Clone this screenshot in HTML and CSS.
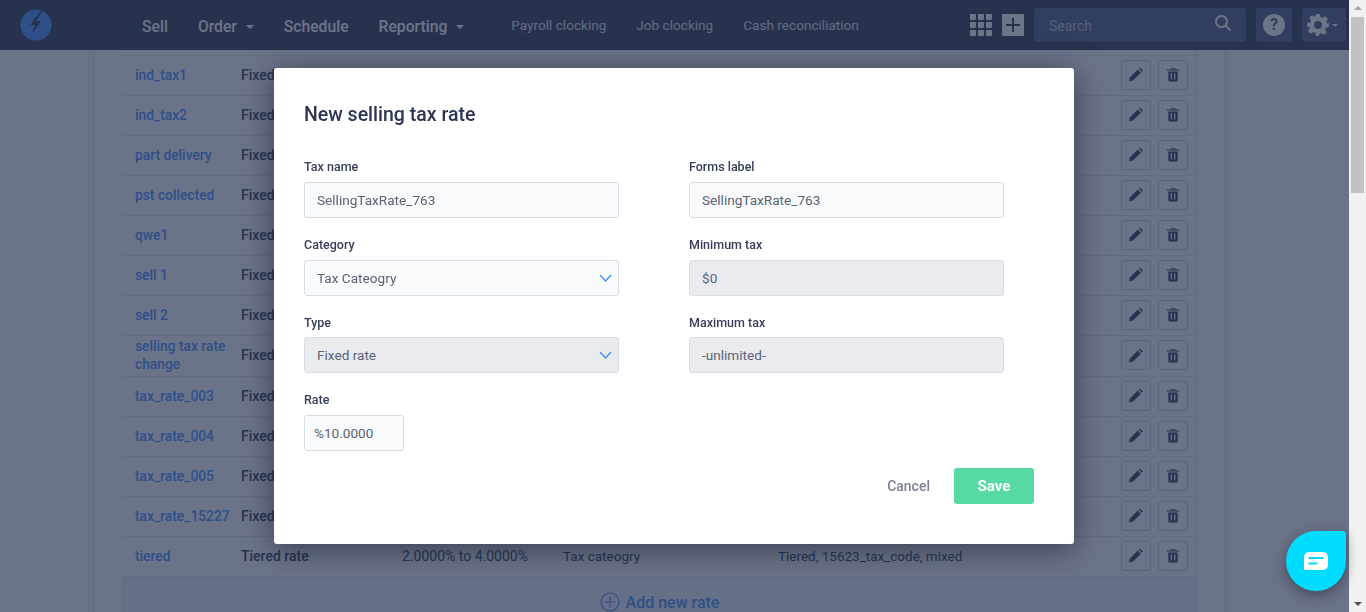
FILE: index.html
```html
<!DOCTYPE html>
<html lang="en">
<head>
    <meta charset="UTF-8">
    <title>Selling tax rates</title>
    <link rel="stylesheet" href="styles.css">
</head>
<body>
    <svg class="defs" width="0" height="0">
        <symbol id="pencil" viewBox="1 .8 14.200 14.200">
            <path d="M1 15l.9-4L10 2.900 13.100 6 5 14.100z"/>
            <path d="M11 1.900l1.100-1.100 3.100 3.100-1.100 1.100z"/>
        </symbol>
        <symbol id="trash" viewBox="-1 -.5 18 19">
            <path fill-rule="evenodd" d="M2 5h12v11a2 2 0 0 1-2 2H4a2 2 0 0 1-2-2zm3 2.500v8h1.600v-8zm4.400 0v8H11v-8z"/>
            <path d="M0 2.500h4.500L5.500.5h5l1 2H16V4H0zM6.300 1.500l-.5 1h4.400l-.5-1z"/>
        </symbol>
    </svg>

    <div class="window">
        <div class="main">
            <header class="topbar">
                <svg class="logo" viewBox="0 0 32 32" width="32" height="32">
                    <circle cx="16" cy="16" r="15.500" fill="#3f8cff"/>
                    <path d="M21 1.500L10 16h5l-3 9 9-13h-5l6-10z" fill="#26324f"/>
                </svg>
                <nav class="nav">
                    <a class="nav-main">Sell</a>
                    <a class="nav-main">Order <i class="caret"></i></a>
                    <a class="nav-main">Schedule</a>
                    <a class="nav-main">Reporting <i class="caret"></i></a>
                </nav>
                <nav class="nav nav-sub">
                    <a>Payroll clocking</a>
                    <a>Job clocking</a>
                    <a>Cash reconciliation</a>
                </nav>
                <div class="tools">
                    <div class="apps">
                        <i></i><i></i><i></i><i></i><i></i><i></i><i></i><i></i><i></i>
                    </div>
                    <svg class="plus" viewBox="0 0 22 22" width="22" height="22">
                        <rect width="22" height="22" rx="1" fill="#fff"/>
                        <path d="M11 4v14M4 11h14" stroke="#26324f" stroke-width="2"/>
                    </svg>
                    <div class="search">
                        <span>Search</span>
                        <svg viewBox="0 0 18 18" width="18" height="18" fill="none" stroke="#fff" stroke-width="2">
                            <circle cx="7.500" cy="7.500" r="5.500"/>
                            <path d="M11.500 11.500l5 5"/>
                        </svg>
                    </div>
                    <div class="tool-box help">
                        <span>?</span>
                    </div>
                    <div class="tool-box gear">
                        <svg viewBox="0 0 24 24" width="24" height="24">
                            <path fill="#fff" fill-rule="evenodd" d="M10 1h4l.6 3.200 1.800.8 2.800-1.800 2.800 2.800-1.800 2.700.8 1.800L23 10v4l-3.200.6-.8 1.800 1.800 2.800-2.800 2.800-2.700-1.800-1.800.8L13 23h-3l-.6-3.200-1.800-.8-2.800 1.800-2.800-2.800L3.800 15.300 3 13.500 1 14v-4l3.200-.6.800-1.800-1.800-2.800 2.800-2.800L8.700 3.800l.7-.3zM12 8a4 4 0 1 0 0 8 4 4 0 0 0 0-8z"/>
                        </svg>
                        <i class="caret"></i>
                    </div>
                </div>
            </header>

            <div class="content">
                <div class="panel">
                    <div class="rates">
                        <div class="row row-cut"></div>
                        <div class="row"><a>ind_tax1</a><b>Fixed rate</b><div class="actions"><button><svg><use href="#pencil"/></svg></button><button><svg><use href="#trash"/></svg></button></div></div>
                        <div class="row"><a>ind_tax2</a><b>Fixed rate</b><div class="actions"><button><svg><use href="#pencil"/></svg></button><button><svg><use href="#trash"/></svg></button></div></div>
                        <div class="row"><a>part delivery</a><b>Fixed rate</b><div class="actions"><button><svg><use href="#pencil"/></svg></button><button><svg><use href="#trash"/></svg></button></div></div>
                        <div class="row"><a>pst collected</a><b>Fixed rate</b><div class="actions"><button><svg><use href="#pencil"/></svg></button><button><svg><use href="#trash"/></svg></button></div></div>
                        <div class="row"><a>qwe1</a><b>Fixed rate</b><div class="actions"><button><svg><use href="#pencil"/></svg></button><button><svg><use href="#trash"/></svg></button></div></div>
                        <div class="row"><a>sell 1</a><b>Fixed rate</b><div class="actions"><button><svg><use href="#pencil"/></svg></button><button><svg><use href="#trash"/></svg></button></div></div>
                        <div class="row"><a>sell 2</a><b>Fixed rate</b><div class="actions"><button><svg><use href="#pencil"/></svg></button><button><svg><use href="#trash"/></svg></button></div></div>
                        <div class="row row-tall"><a>selling tax rate change</a><b>Fixed rate</b><div class="actions"><button><svg><use href="#pencil"/></svg></button><button><svg><use href="#trash"/></svg></button></div></div>
                        <div class="row"><a>tax_rate_003</a><b>Fixed rate</b><div class="actions"><button><svg><use href="#pencil"/></svg></button><button><svg><use href="#trash"/></svg></button></div></div>
                        <div class="row"><a>tax_rate_004</a><b>Fixed rate</b><div class="actions"><button><svg><use href="#pencil"/></svg></button><button><svg><use href="#trash"/></svg></button></div></div>
                        <div class="row"><a>tax_rate_005</a><b>Fixed rate</b><div class="actions"><button><svg><use href="#pencil"/></svg></button><button><svg><use href="#trash"/></svg></button></div></div>
                        <div class="row"><a>tax_rate_15227</a><b>Fixed rate</b><div class="actions"><button><svg><use href="#pencil"/></svg></button><button><svg><use href="#trash"/></svg></button></div></div>
                        <div class="row"><a>tiered</a><b>Tiered rate</b><span>2.0000% to 4.0000%</span><span class="category">Tax cateogry</span><span class="codes">Tiered, 15623_tax_code, mixed</span><div class="actions"><button><svg><use href="#pencil"/></svg></button><button><svg><use href="#trash"/></svg></button></div></div>
                    </div>
                    <div class="add-rate">
                        <svg viewBox="0 0 20 20" width="20" height="20" fill="none" stroke="#3f8cff" stroke-width="1.200">
                            <circle cx="10" cy="10" r="9"/>
                            <path d="M10 4.500v11M4.500 10h11"/>
                        </svg>
                        Add new rate
                    </div>
                </div>
            </div>
        </div>

        <div class="scrollbar">
            <i class="arrow-up"></i>
            <div class="thumb"></div>
            <i class="arrow-down"></i>
        </div>
    </div>

    <div class="backdrop">
        <div class="modal">
            <h2>New selling tax rate</h2>
            <div class="form">
                <div class="col">
                    <label>Tax name</label>
                    <div class="input">SellingTaxRate_763</div>
                    <label>Category</label>
                    <div class="input select">Tax Cateogry<svg class="chev"><path d="M1 1l5.500 6L12 1"/></svg></div>
                    <label class="tight">Type</label>
                    <div class="input select disabled">Fixed rate<svg class="chev"><path d="M1 1l5.500 6L12 1"/></svg></div>
                    <label>Rate</label>
                    <div class="input short">%10.0000</div>
                </div>
                <div class="col">
                    <label>Forms label</label>
                    <div class="input">SellingTaxRate_763</div>
                    <label>Minimum tax</label>
                    <div class="input disabled">$0</div>
                    <label class="tight">Maximum tax</label>
                    <div class="input disabled">-unlimited-</div>
                </div>
            </div>
            <div class="footer">
                <a class="cancel">Cancel</a>
                <button class="save">Save</button>
            </div>
        </div>
    </div>

    <div class="chat">
        <svg viewBox="0 0 24 18" width="24" height="18">
            <path d="M5 0h14a5 5 0 0 1 5 5v8a5 5 0 0 1-5 5H1a1 1 0 0 1-1-1V5a5 5 0 0 1 5-5z" fill="#fff"/>
            <path d="M4.500 6h15M4.500 11.500h9" stroke="#00dcff" stroke-width="2"/>
        </svg>
    </div>
</body>
</html>
```

FILE: styles.css
```css
* {
    box-sizing: border-box;
}
html, body {
    margin: 0;
    height: 612px;
    overflow: hidden;
}
body {
    font-family: Roboto, "Liberation Sans", sans-serif;
    font-size: 14px;
    color: #2b3553;
    background-color: #f7f8fa;
}
.defs {
    position: absolute;
}
.window {
    display: flex;
    height: 612px;
}
.main {
    flex: 1;
    min-width: 0;
    overflow: hidden;
}

/* top bar */
.topbar {
    display: flex;
    align-items: center;
    height: 50px;
    padding: 0 3px 0 20px;
    background-color: #2b3250;
    color: white;
}
.logo {
    margin-right: 90px;
}
.nav {
    display: flex;
    align-items: center;
    gap: 30px;
    padding-top: 2px;
}
.nav-main {
    font-size: 15.700px;
    font-weight: 500;
}
.nav-sub {
    margin-left: 47px;
    font-size: 13.600px;
    opacity: 0.85;
    padding-top: 0;
}
.caret {
    display: inline-block;
    margin-left: 5px;
    vertical-align: middle;
    border-top: 4px solid white;
    border-left: 4px solid transparent;
    border-right: 4px solid transparent;
}
.tools {
    display: flex;
    align-items: center;
    margin-left: auto;
}
.apps {
    display: grid;
    grid-template-columns: repeat(3, 6px);
    gap: 2px;
    margin-right: 10px;
}
.apps i {
    height: 6px;
    border-radius: 1px;
    background: white;
}
.plus {
    margin-right: 10px;
}
.search {
    display: flex;
    align-items: center;
    justify-content: space-between;
    width: 212px;
    height: 34px;
    padding: 0 14px 4px 15px;
    margin-right: 10px;
    border-radius: 3px;
    background-color: #47577f;
    font-size: 14px;
}
.search span {
    padding-top: 6px;
    opacity: 0.6;
}
.tool-box {
    display: flex;
    align-items: center;
    height: 34px;
    border-radius: 3px;
    background-color: #47577f;
}
.help {
    justify-content: center;
    width: 36px;
    margin-right: 10px;
}
.help span {
    width: 22px;
    height: 22px;
    border-radius: 50%;
    background: white;
    color: #47577f;
    font-size: 16px;
    font-weight: 700;
    line-height: 22px;
    text-align: center;
}
.gear {
    width: 44px;
    padding-left: 4px;
}
.gear .caret {
    margin-left: 2px;
    border-width: 3px 3px 0 3px;
}

/* rates table behind the modal */
.panel {
    width: 1133px;
    height: 562px;
    margin-left: 93px;
    padding-left: 28px;
    border-left: 1px solid #dfe2e8;
    border-right: 1px solid #dfe2e8;
}
.rates {
    width: 1074px;
    border-right: 1px solid #e2e5ea;
}
.row {
    display: grid;
    grid-template-columns: 106px 161px 161px 215px 1fr 67px;
    align-items: center;
    height: 40px;
    padding: 0 7px 2px 13px;
    border-bottom: 1px solid #e2e5ea;
    background-color: #fbfcfd;
    font-size: 14px;
}
.row-cut {
    height: 6px;
    padding-bottom: 0;
}
.row-tall {
    height: 41px;
}
.row a {
    color: #3f8cff;
    font-size: 13.800px;
    font-weight: 500;
    line-height: 18px;
}
.row b {
    font-weight: 500;
}
.category, .codes {
    font-size: 13.500px;
}
.actions {
    grid-column: 6;
    display: flex;
    gap: 7px;
}
.actions button {
    display: flex;
    align-items: center;
    justify-content: center;
    width: 30px;
    height: 30px;
    padding: 0;
    border: 1px solid #c9ced8;
    border-radius: 3px;
    background: none;
}
.actions svg {
    width: 14px;
    height: 15px;
    fill: #2b3553;
}
.add-rate {
    display: flex;
    align-items: center;
    justify-content: center;
    gap: 6px;
    width: 1075px;
    height: 40px;
    padding-top: 10px;
    border: 1px solid #e2e5ea;
    background-color: #e9eefc;
    color: #3f8cff;
    font-size: 16px;
    font-weight: 500;
}

/* browser scrollbar */
.scrollbar {
    position: relative;
    z-index: 3;
    display: flex;
    flex-direction: column;
    align-items: center;
    width: 17px;
    padding: 6px 2px;
    background-color: #f1f1f1;
}
.thumb {
    width: 100%;
    height: 176px;
    margin-top: 7px;
    background-color: #c1c1c1;
}
.arrow-up {
    border-bottom: 4px solid #a3a3a3;
    border-left: 4px solid transparent;
    border-right: 4px solid transparent;
}
.arrow-down {
    margin-top: auto;
    border-top: 4px solid #505050;
    border-left: 4px solid transparent;
    border-right: 4px solid transparent;
}

/* modal */
.backdrop {
    position: fixed;
    top: 0;
    left: 0;
    right: 17px;
    bottom: 0;
    z-index: 2;
    display: flex;
    justify-content: center;
    align-items: flex-start;
    padding: 68px 1px 0 0;
    background-color: rgba(38, 50, 80, 0.68);
}
.modal {
    width: 800px;
    height: 476px;
    padding: 34px 40px 0 30px;
    border-radius: 3px;
    background: white;
    box-shadow: 0 5px 30px rgba(20, 25, 40, 0.6);
}
.modal h2 {
    margin: 0 0 31px;
    font-size: 19.500px;
    font-weight: 500;
    line-height: 26px;
    color: #2b3553;
}
.form {
    display: flex;
    gap: 70px;
}
.col {
    width: 315px;
}
.col label {
    display: block;
    height: 23px;
    font-size: 12.500px;
    font-weight: 500;
    line-height: 16px;
    color: #363f5a;
}
.col .tight {
    height: 22px;
}
.input {
    position: relative;
    display: flex;
    align-items: center;
    height: 36px;
    margin-bottom: 19px;
    padding: 0 12px;
    border: 1px solid #d8dce8;
    border-radius: 3px;
    background-color: #f9fafc;
    font-size: 13.600px;
    color: #5a6275;
}
.disabled {
    background-color: #e9ebef;
}
.short {
    width: 100px;
    padding: 0 9px;
}
.chev {
    position: absolute;
    right: 6px;
    top: 13px;
    width: 13px;
    height: 8px;
    fill: none;
    stroke: #3f8cff;
    stroke-width: 1.300;
}
.footer {
    display: flex;
    align-items: center;
    justify-content: flex-end;
    gap: 24px;
    margin-top: -2px;
}
.cancel {
    font-weight: 500;
    color: #7a8294;
}
.save {
    width: 80px;
    height: 36px;
    border: none;
    border-radius: 3px;
    background-color: #56d9a2;
    color: white;
    font-family: inherit;
    font-size: 15px;
    font-weight: 700;
}

.chat {
    position: fixed;
    right: 20px;
    bottom: 21px;
    z-index: 3;
    display: flex;
    align-items: center;
    justify-content: center;
    width: 60px;
    height: 60px;
    border-radius: 50% 4px 50% 50%;
    background-color: #00dcff;
    box-shadow: 0 4px 12px rgba(20, 25, 40, 0.45);
}
```
